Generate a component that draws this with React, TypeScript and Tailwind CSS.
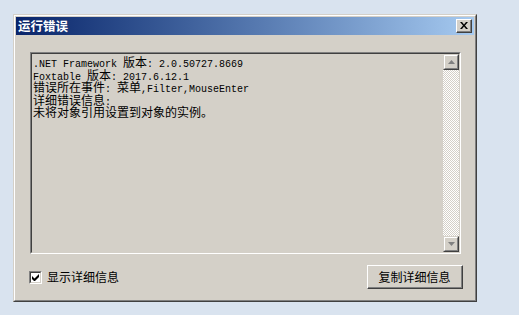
import React from "react";

const CJK = /[\u3000-\u303f\u4e00-\u9fff\uff00-\uffef]/;

function Mixed({ s }: { s: string }) {
  const parts: { t: string; c: boolean }[] = [];
  for (const ch of s) {
    const c = CJK.test(ch);
    const last = parts[parts.length - 1];
    if (last && last.c === c) last.t += ch;
    else parts.push({ t: ch, c });
  }
  return (
    <div className="h-[12.5px] leading-[12.5px] whitespace-pre">
      {parts.map((p, i) =>
        p.c ? (
          <span key={i} className="text-[12px] font-['Noto_Sans_CJK_SC',sans-serif]">
            {p.t}
          </span>
        ) : (
          <span key={i} className="text-[10px] font-['Liberation_Mono',monospace]">
            {p.t}
          </span>
        )
      )}
    </div>
  );
}

function ArrowBtn({ up }: { up: boolean }) {
  return (
    <div className="w-[16px] h-[16px] bg-[#d4d0c8] border border-t-[#d4d0c8] border-l-[#d4d0c8] border-r-[#404040] border-b-[#404040]">
      <div className="w-full h-full border border-t-white border-l-white border-r-[#808080] border-b-[#808080] flex items-center justify-center">
        <svg width="7" height="4" viewBox="0 0 7 4">
          {up ? (
            <polygon points="3.5,0 7,4 0,4" fill="#808080" />
          ) : (
            <polygon points="0,0 7,0 3.5,4" fill="#808080" />
          )}
        </svg>
      </div>
    </div>
  );
}

export default function App() {
  const lines = [
    ".NET Framework 版本: 2.0.50727.8669",
    "Foxtable 版本: 2017.6.12.1",
    "错误所在事件: 菜单,Filter,MouseEnter",
    "详细错误信息:",
    "未将对象引用设置到对象的实例。",
  ];
  return (
    <div className="w-[519px] h-[315px] bg-[#d9e3ef] pl-[13px] pt-[14px] font-['Noto_Sans_CJK_SC',sans-serif]">
      <div className="w-[464px] h-[288px] border border-t-[#d4d0c8] border-l-[#d4d0c8] border-r-[#404040] border-b-[#404040] bg-[#d4d0c8]">
        <div className="w-full h-full border border-t-white border-l-white border-r-[#808080] border-b-[#808080] p-px flex flex-col">
          {/* Title bar */}
          <div className="h-[18px] bg-linear-to-r from-[#0a246a] to-[#a6caf0] flex items-center justify-between">
            <span className="pl-[2px] text-white font-bold text-[12.5px] leading-none">运行错误</span>
            <div className="mr-[2px] w-[16px] h-[14px] bg-[#d4d0c8] border border-t-white border-l-white border-r-[#404040] border-b-[#404040]">
              <div className="w-full h-full border-r border-b border-[#808080] flex items-center justify-center">
                <svg width="8" height="7" viewBox="0 0 8 7">
                  <path d="M0 0h2l2 2.5L6 0h2L5 3.5 8 7H6L4 4.5 2 7H0l3-3.5z" fill="#000" />
                </svg>
              </div>
            </div>
          </div>
          {/* Client */}
          <div className="flex-1 flex flex-col">
            <div className="ml-[14px] mt-[17px] w-[431px] h-[202px] border border-t-[#808080] border-l-[#808080] border-r-white border-b-white">
              <div className="w-full h-full border border-t-[#404040] border-l-[#404040] border-r-[#d4d0c8] border-b-[#d4d0c8] flex">
                <div className="flex-1 pl-px text-black">
                  {lines.map((l, i) => (
                    <Mixed key={i} s={l} />
                  ))}
                </div>
                <div className="w-[16px] flex flex-col">
                  <ArrowBtn up />
                  <div className="flex-1 bg-[image:repeating-conic-gradient(#d4d0c8_0_25%,#ffffff_0_50%)] bg-[size:2px_2px]" />
                  <ArrowBtn up={false} />
                </div>
              </div>
            </div>
            <div className="mt-[11px] ml-[13px] mr-[11px] flex items-center justify-between">
              <div className="flex items-center">
                <div className="w-[13px] h-[13px] border border-t-[#808080] border-l-[#808080] border-r-white border-b-white">
                  <div className="w-full h-full border border-t-[#404040] border-l-[#404040] border-r-[#d4d0c8] border-b-[#d4d0c8] bg-white flex items-center justify-center">
                    <svg width="7" height="7" viewBox="0 0 7 7">
                      <path d="M0 2v3l2 2h1l4-4V0L2.5 4.5z" fill="#000" />
                    </svg>
                  </div>
                </div>
                <span className="ml-[5px] text-[12px] leading-none text-black">显示详细信息</span>
              </div>
              <div className="w-[96px] h-[24px] border border-t-white border-l-white border-r-[#404040] border-b-[#404040]">
                <div className="w-full h-full border-r border-b border-[#808080] flex items-center justify-center text-[12px] text-black leading-none">
                  复制详细信息
                </div>
              </div>
            </div>
          </div>
        </div>
      </div>
    </div>
  );
}
